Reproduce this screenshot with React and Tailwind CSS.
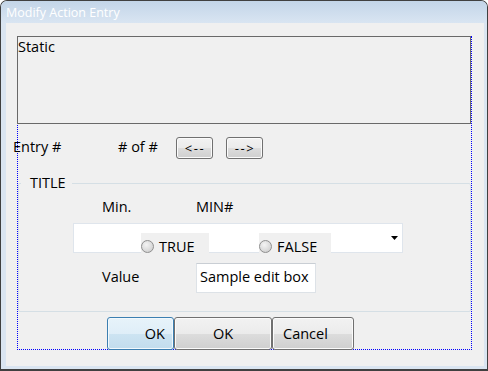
import React from 'react';

// Windows 7 style "Modify Action Entry" dialog

function Win7Button({ children, className = '', primary = false }) {
  const skin = primary
    ? 'border-[#3c7fb1] bg-[linear-gradient(to_bottom,#e7f3fa_0%,#dfeef8_50%,#cde4f2_50%,#c2dced_100%)] shadow-[inset_0_0_0_1px_#f2f9fd]'
    : 'border-[#707070] bg-[linear-gradient(to_bottom,#f2f2f2_0%,#ebebeb_50%,#dddddd_50%,#cfcfcf_100%)] shadow-[inset_0_0_0_1px_#fbfbfb]';
  return (
    <div className={`flex items-center rounded-[3px] border text-black ${skin} ${className}`}>
      {children}
    </div>
  );
}

function Radio({ label }) {
  return (
    <div className="flex items-center gap-[5px]">
      <span className="w-[13px] h-[13px] rounded-full border border-[#8f8f8f] bg-[radial-gradient(circle_at_40%_35%,#f4f4f4_0%,#dcdcdc_55%,#c6c6c6_100%)]" />
      <span className="leading-[15px]">{label}</span>
    </div>
  );
}

export default function App() {
  return (
    <div className="w-[488px] h-[371px] flex flex-col bg-[#dae5f1] border border-b-2 border-[#404040] rounded-t-[7px] overflow-hidden font-['Open_Sans',sans-serif] text-[14.5px] text-black">
      {/* Title bar */}
      <div className="h-[22px] shrink-0 flex items-center pl-[5px] pt-[1px] bg-[linear-gradient(to_bottom,#c3d5e8,#d9e5f2)]">
        <span className="text-[12.5px] leading-[16px] text-white">Modify Action Entry</span>
      </div>

      {/* Client area */}
      <div className="flex-1 ml-[5px] mr-[3px] mb-[3px] bg-[#f0f0f0] pl-[11px] pt-[13px]">
        <div className="w-[455px] border-x border-b border-dotted border-[#0000ff]">
          {/* Static text box */}
          <div className="-ml-px w-[454px] h-[88px] border border-[#696969] bg-[#f0f0f0] leading-[20px]">
            Static
          </div>

          {/* Entry navigation */}
          <div className="mt-[13px] h-[22px] flex items-start leading-[20px]">
            <span className="-ml-[5px] w-[105px] shrink-0">Entry #</span>
            <span className="w-[58px] shrink-0">{'# of #'}</span>
            <Win7Button className="w-[37px] h-[22px] justify-center text-[13px] tracking-[1.5px] pl-[1px]">{'<--'}</Win7Button>
            <Win7Button className="ml-[13px] w-[37px] h-[22px] justify-center text-[13px] tracking-[1.5px] pl-[1px]">{'-->'}</Win7Button>
          </div>

          {/* Group box */}
          <fieldset className="mt-[14px] border border-[#d5dfe5] rounded-[2px] pt-[4px] pb-[18px]">
            <legend className="ml-[2px] pl-[9px] pr-[6px] leading-[20px]">TITLE</legend>

            <div className="flex pl-[83px] leading-[20px]">
              <span className="w-[94px] shrink-0">Min.</span>
              <span>MIN#</span>
            </div>

            <div className="mt-[6px] ml-[54px] w-[330px] h-[30px] bg-white border border-[#dfe5ec] flex items-start">
              <div className="ml-[67px] mt-[9px] w-[68px] h-[21px] bg-[#f0f0f0] flex items-center pt-[5px]">
                <Radio label="TRUE" />
              </div>
              <div className="ml-[50px] mt-[9px] w-[72px] h-[21px] bg-[#f0f0f0] flex items-center pt-[5px]">
                <Radio label="FALSE" />
              </div>
              <svg className="ml-auto mr-[4px] mt-[12px]" width="7" height="4" viewBox="0 0 7 4">
                <path d="M0 0H7L3.5 4Z" fill="#000" />
              </svg>
            </div>

            <div className="mt-[10px] h-[30px] flex items-center pl-[83px]">
              <span className="w-[94px] shrink-0 leading-[20px] pb-[2px]">Value</span>
              <div className="w-[120px] h-[30px] bg-white border border-[#dde2e7] border-t-[#c9ced4] flex items-center pl-[3px] pb-[2px] leading-[20px]">
                Sample edit box
              </div>
            </div>
          </fieldset>

          {/* Dialog buttons */}
          <div className="relative mt-[5px] -mb-px h-[33px] flex pl-[89px]">
            <Win7Button primary className="w-[67px] h-[33px] justify-end pr-[8px]">OK</Win7Button>
            <Win7Button className="w-[98px] h-[33px] justify-center">OK</Win7Button>
            <Win7Button className="w-[82px] h-[33px] justify-start pl-[10px]">Cancel</Win7Button>
          </div>
        </div>
      </div>
    </div>
  );
}
